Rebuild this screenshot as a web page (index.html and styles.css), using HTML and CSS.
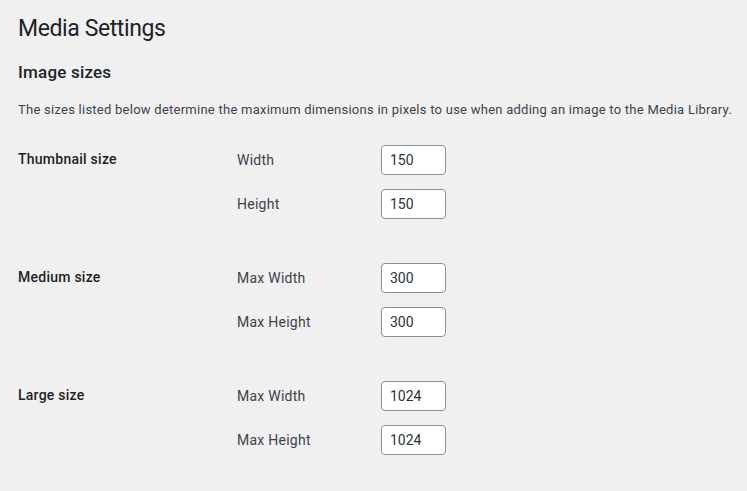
FILE: index.html
```html
<!DOCTYPE html>
<html lang="en">
<head>
    <meta charset="UTF-8">
    <meta name="viewport" content="width=device-width, initial-scale=1.0">
    <title>Media Settings</title>
    <link rel="stylesheet" href="styles.css">
</head>
<body>
    <div class="wrap">
        <h1>Media Settings</h1>
        <h2>Image sizes</h2>
        <p class="intro">The sizes listed below determine the maximum dimensions in pixels to use when adding an image to the Media Library.</p>

        <div class="form-table">
            <div class="row">
                <div class="row-title">Thumbnail size</div>
                <div class="fields">
                    <div class="field">
                        <label for="thumbnail_size_w">Width</label>
                        <input type="number" id="thumbnail_size_w" class="small-text" value="150">
                    </div>
                    <div class="field">
                        <label for="thumbnail_size_h">Height</label>
                        <input type="number" id="thumbnail_size_h" class="small-text" value="150">
                    </div>
                </div>
            </div>

            <div class="row">
                <div class="row-title">Medium size</div>
                <div class="fields">
                    <div class="field">
                        <label for="medium_size_w">Max Width</label>
                        <input type="number" id="medium_size_w" class="small-text" value="300">
                    </div>
                    <div class="field">
                        <label for="medium_size_h">Max Height</label>
                        <input type="number" id="medium_size_h" class="small-text" value="300">
                    </div>
                </div>
            </div>

            <div class="row">
                <div class="row-title">Large size</div>
                <div class="fields">
                    <div class="field">
                        <label for="large_size_w">Max Width</label>
                        <input type="number" id="large_size_w" class="small-text" value="1024">
                    </div>
                    <div class="field">
                        <label for="large_size_h">Max Height</label>
                        <input type="number" id="large_size_h" class="small-text" value="1024">
                    </div>
                </div>
            </div>
        </div>
    </div>
</body>
</html>
```

FILE: styles.css
```css
body {
    font-family: Roboto, "Noto Sans", sans-serif;
    background-color: #f0f0f1;
    color: #3c434a;
    margin: 0;
    padding: 0;
    font-size: 13px;
    letter-spacing: 0.25px;
}
.wrap {
    padding: 10px 18px 20px;
}
h1 {
    font-size: 23px;
    font-weight: 400;
    line-height: 1.3;
    letter-spacing: -0.4px;
    color: #1d2327;
    margin: 4px 0 0;
}
h2 {
    font-size: 17px;
    font-weight: 500;
    line-height: 1.3;
    letter-spacing: 0.2px;
    color: #1d2327;
    margin: 17px 0 0;
}
.intro {
    font-size: 13px;
    line-height: 1.5;
    margin: 17px 0 0;
    white-space: nowrap;
}
.form-table {
    margin-top: 26px;
    display: flex;
    flex-direction: column;
    gap: 44px;
}
.row {
    display: grid;
    grid-template-columns: 219px 1fr;
}
.row-title {
    font-size: 14px;
    font-weight: 500;
    color: #1d2327;
    line-height: 1.3;
    padding-top: 5px;
}
.fields {
    display: flex;
    flex-direction: column;
    gap: 14px;
}
.field {
    display: flex;
    align-items: center;
}
.field label {
    width: 144px;
    font-size: 14px;
}
.small-text {
    box-sizing: border-box;
    width: 65px;
    height: 30px;
    padding: 0 0 0 8px;
    margin: 0;
    font-family: inherit;
    font-size: 14px;
    letter-spacing: 0;
    color: #2c3338;
    background: #fff;
    border: 1px solid #8c8f94;
    border-radius: 4px;
    -moz-appearance: textfield;
}
.small-text::-webkit-inner-spin-button,
.small-text::-webkit-outer-spin-button {
    -webkit-appearance: none;
    margin: 0;
}
.small-text:focus {
    border-color: #2271b1;
    outline: none;
}
```
